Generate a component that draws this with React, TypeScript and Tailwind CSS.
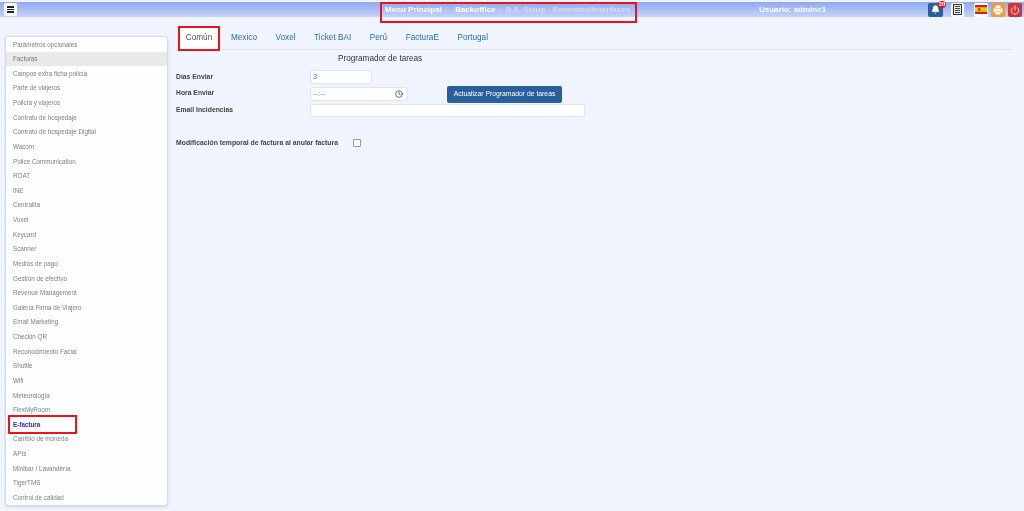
import React from "react";
import { Bell, Power, Clock } from "lucide-react";

const items = ["Parámetros opcionales","Facturas","Campos extra ficha policía","Parte de viajeros","Policía y viajeros","Contrato de hospedaje","Contrato de hospedaje Digital","Wacom","Police Communication","ROAT","INE","Centralita","Voxel","Keycard","Scanner","Medios de pago","Gestión de efectivo","Revenue Management","Galería Firma de Viajero","Email Marketing","Checkin QR","Reconocimiento Facial","Shuttle","Wifi","Meteorología","FlexMyRoom","E-factura","Cambio de moneda","APIs","Minibar / Lavandería","TigerTMS","Control de calidad"];
const tabs = ["Mexico","Voxel","Ticket BAI","Perú","FacturaE","Portugal"];

export default function App() {
  return (
    <div className="w-[1024px] h-[511px] overflow-hidden bg-[#f0f4ff] font-['Liberation_Sans',Arial,sans-serif] blur-[0.35px]">
      <header className="h-[15px] mt-[2px] flex items-center bg-gradient-to-b from-[#8fa9f2] to-[#c5d3fa]">
        <button className="ml-[4px] w-[13px] h-[13px] bg-white rounded-[2px] flex flex-col items-center justify-center gap-[1px]">
          <span className="w-[7px] h-[1.5px] bg-[#222]" /><span className="w-[7px] h-[1.5px] bg-[#222]" /><span className="w-[7px] h-[1.5px] bg-[#222]" />
        </button>
        <div className="ml-[363px] w-[257px] h-[21px] self-start border-2 border-[#e8141c] flex items-start pl-[3px] text-[8px] font-bold leading-[12px] text-white whitespace-nowrap">
          <span>Menú Principal</span>
          <span className="ml-[3px] font-normal text-[#c9d5f7]">/</span>
          <span className="ml-[8px]">Backoffice</span>
          <span className="ml-[3px] font-normal text-[#c9d5f7]">/</span>
          <span className="ml-[5px] tracking-[0.05px] text-[#d3ddfa]">B.8. Setup - Formatos/Interfaces</span>
        </div>
        <span className="ml-[122px] text-[8px] font-bold text-white whitespace-nowrap w-[169px]">Usuario: adminc1</span>
        <div className="flex items-center">
          <div className="relative w-[15px] h-[14px] bg-[#2a5f9e] rounded-[2px] flex items-center justify-center">
            <Bell size={9} className="text-white" fill="white" />
            <span className="absolute -top-[2px] -right-[3px] w-[8px] h-[7px] rounded-full bg-[#e8141c] text-white text-[6px] font-bold leading-[7px] text-center">20</span>
          </div>
          <div className="ml-[8px] w-[13px] h-[14px] bg-white rounded-[2px] flex items-center justify-center">
            <svg width="9" height="11" viewBox="0 0 9 11"><rect x="0.5" y="0.5" width="8" height="10" fill="#e8e8e8" stroke="#333" /><path d="M2 2.5h5M2 4.5h5M2 6.5h5M2 8.5h5" stroke="#333" strokeWidth="0.9" /></svg>
          </div>
          <div className="ml-[10px] w-[14px] h-[14px] bg-white rounded-[2px] flex items-center justify-center">
            <svg width="12" height="9" viewBox="0 0 12 9"><rect width="12" height="9" fill="#c8202c" /><rect y="2.2" width="12" height="4.6" fill="#f7c600" /><rect x="3" y="3" width="2.4" height="3" fill="#b5502a" /></svg>
          </div>
          <div className="ml-[3px] w-[14px] h-[14px] bg-[#ec9d3c] rounded-[2px] flex items-center justify-center">
            <svg width="10" height="10" viewBox="0 0 10 10" fill="white"><rect x="2.5" y="0.5" width="5" height="2.5" /><path d="M0.5 3.5h9v4H8V6H2v1.5H0.5z" /><rect x="2.5" y="6.5" width="5" height="3" /></svg>
          </div>
          <div className="ml-[3px] w-[14px] h-[14px] bg-[#cf3434] rounded-[2px] flex items-center justify-center">
            <Power size={10} className="text-white" />
          </div>
        </div>
      </header>
      <div className="flex">
        <aside className="ml-[5px] mt-[19px] w-[163px] h-[470px] bg-[#fcfdff] border border-[#d8dbe2] rounded-[3px] shadow-sm shrink-0">
          {items.map((t) => (
            <div key={t} className={"h-[14.63px] flex items-center text-[6.3px] whitespace-nowrap pl-[7px] " + (t === "Facturas" ? "bg-[#e9e9ec] text-[#777]" : t === "E-factura" ? "text-[#2a2ac0] font-bold" : "text-[#808080]")}>
              {t === "E-factura" ? (
                <span className="-ml-[5px] pl-[3px] w-[69px] h-[19px] border-2 border-[#e8141c] flex items-center shrink-0">{t}</span>
              ) : t}
            </div>
          ))}
        </aside>
        <main className="ml-[8px] pt-[9px] flex-1 min-w-0">
          <nav className="w-[836px] h-[24px] border-b border-[#dee2e6] flex items-start text-[8.2px] text-[#2a6db0]">
            <div className="ml-[2px] w-[42px] h-[25px] border-2 border-[#e8141c] bg-white flex items-center justify-center text-[#555]">Común</div>
            <div className="ml-[11px] flex items-center h-[25px] gap-[18.6px]">
              {tabs.map((t) => (
                <span key={t} className="whitespace-nowrap">{t}</span>
              ))}
            </div>
          </nav>
          <div className="ml-[162px] mt-[4px] text-[8.2px] text-[#333] leading-[10px]">Programador de tareas</div>
          <div className="flex mt-[6px]">
            <div className="w-[134px] text-[6.8px] font-bold text-[#444] leading-[10px]">
              <div className="h-[17px] pt-[2px]">Días Enviar</div>
              <div className="h-[17px] pt-[1px]">Hora Enviar</div>
              <div className="h-[17px] pt-[1px]">Email Incidencias</div>
            </div>
            <div className="flex flex-col gap-[3px]">
              <div className="w-[62px] h-[14px] bg-white border border-[#dfe3ea] rounded-[3px] text-[7.5px] text-[#777] px-[2px] flex items-center">3</div>
              <div className="flex items-start">
                <div className="w-[98px] h-[14px] bg-white border border-[#dfe3ea] rounded-[3px] text-[7.5px] text-[#888] px-[2px] flex items-center justify-between">
                  <span>--:--</span>
                  <Clock size={8} className="text-[#333] mr-[2px]" />
                </div>
                <button className="ml-[39px] -mt-[1px] w-[115px] h-[17px] bg-[#2a5f9e] rounded-[2px] text-white text-[6.8px] flex items-center justify-center whitespace-nowrap">Actualizar Programador de tareas</button>
              </div>
              <div className="-mt-[2px] w-[275px] h-[13px] bg-white border border-[#dfe3ea] rounded-[2px]" />
            </div>
          </div>
          <div className="flex items-center mt-[16.5px]">
            <span className="w-[177px] text-[6.85px] font-bold text-[#444] whitespace-nowrap">Modificación temporal de factura al anular factura</span>
            <span className="w-[8px] h-[8px] bg-white border border-[#999] rounded-[1px]" />
          </div>
        </main>
      </div>
    </div>
  );
}
